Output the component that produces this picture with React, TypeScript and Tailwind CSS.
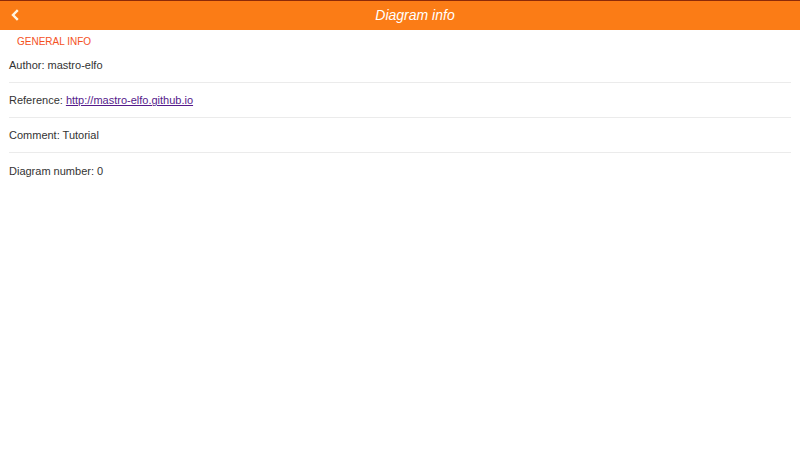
const row = "flex h-[35px] items-center pt-px";
const divided = `${row} border-b border-[#ebebeb]`;

export default function App() {
  return (
    <div className="min-h-screen bg-white font-['Liberation_Sans',Arial,sans-serif] text-[#333]">
      <header className="grid h-[30px] grid-cols-[30px_1fr] items-center border-t border-[#8c2a08] bg-[#fb7c16] pb-px text-white">
        <button type="button" aria-label="Back" className="flex h-full items-center justify-center">
          <svg width="8" height="12" viewBox="0 0 8 12" fill="none" stroke="#fff4e0" strokeWidth="2.4">
            <path d="M6.8 1.2 2 6l4.8 4.8" />
          </svg>
        </button>
        <h1 className="text-center text-sm italic">Diagram info</h1>
      </header>
      <main className="px-[9px] pt-[6px]">
        <h2 className="px-2 text-[10px] leading-3 text-[#f4511e] uppercase">General info</h2>
        <ul className="text-[11px]">
          <li className={divided}>Author: mastro-elfo</li>
          <li className={divided}>
            <span>
              Reference:{" "}
              <a href="http://mastro-elfo.github.io" className="text-[#551a8b] underline">
                http://mastro-elfo.github.io
              </a>
            </span>
          </li>
          <li className={divided}>Comment: Tutorial</li>
          <li className={row}>Diagram number: 0</li>
        </ul>
      </main>
    </div>
  );
}
